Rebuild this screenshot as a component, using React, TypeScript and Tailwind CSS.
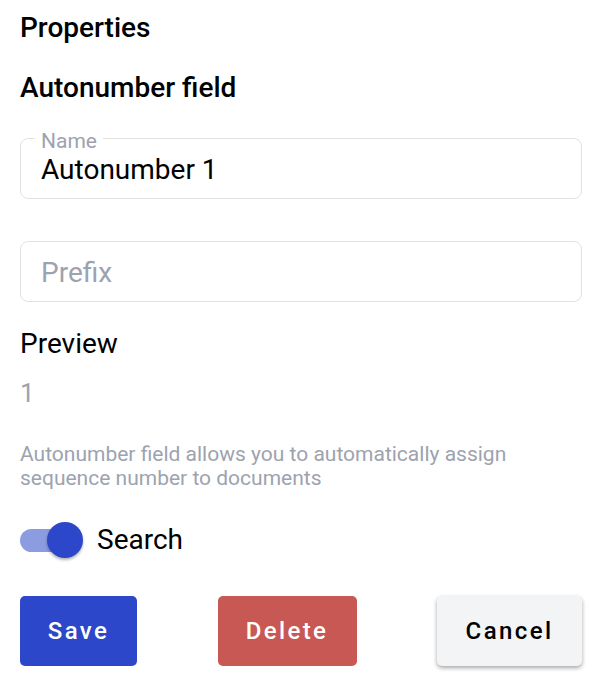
import React, { useState } from 'react'

const font = { fontFamily: 'Roboto, "Noto Sans", sans-serif' }

type FieldProps = {
  label?: string
  value?: string
  placeholder?: string
}

const OutlinedField: React.FC<FieldProps> = ({ label, value, placeholder }) => {
  return (
    <div className="relative h-[61px] rounded-lg border border-[#e2e2e2] flex items-center pl-[20px] pt-[2px]">
      {label ? (
        <span className="absolute -top-[10px] left-[14px] bg-white px-[6px] text-[21px] leading-[24px] text-[#9ca3af]">
          {label}
        </span>
      ) : null}
      {value ? (
        <span className="text-[28px] leading-[32px] text-black">{value}</span>
      ) : (
        <span className="text-[28px] leading-[32px] text-[#9ca3af]">{placeholder}</span>
      )}
    </div>
  )
}

export default function App() {
  const [search, setSearch] = useState(true)

  return (
    <div className="min-h-[697px] bg-white" style={font}>
      <div className="ml-5 w-[562px] flex flex-col">
        <h2 className="mt-[12px] text-[28px] leading-[32px] font-medium text-black">Properties</h2>
        <h3 className="mt-[28px] text-[28px] leading-[32px] font-medium text-black">
          Autonumber field
        </h3>

        <div className="mt-[34px]">
          <OutlinedField label="Name" value="Autonumber 1" />
        </div>
        <div className="mt-[42px]">
          <OutlinedField placeholder="Prefix" />
        </div>

        <div className="mt-[26px] text-[28px] leading-[32px] text-black">Preview</div>
        <div className="mt-[17px] text-[26px] leading-[32px] text-[#9ca3af]">1</div>

        <p className="mt-[33px] text-[21px] leading-[24px] text-[#9ca3af]">
          Autonumber field allows you to automatically assign
          <br />
          sequence number to documents
        </p>

        <div className="mt-[32px] flex items-center h-[36px]">
          <button
            type="button"
            onClick={() => setSearch(!search)}
            className="relative w-[64px] h-[36px] flex items-center"
          >
            <span
              className={
                search
                  ? 'block w-[60px] h-[23px] rounded-full bg-[#8b9de0]'
                  : 'block w-[60px] h-[23px] rounded-full bg-gray-300'
              }
            />
            <span
              className={
                search
                  ? 'absolute left-[27px] top-0 w-[36px] h-[36px] rounded-full bg-[#2c47c9] shadow-[0_2px_3px_rgba(0,0,0,0.3)]'
                  : 'absolute left-0 top-0 w-[36px] h-[36px] rounded-full bg-white shadow-[0_2px_3px_rgba(0,0,0,0.3)]'
              }
            />
          </button>
          <span className="ml-[13px] text-[28px] leading-[32px] text-black">Search</span>
        </div>

        <div className="mt-[38px] flex justify-between">
          <button
            type="button"
            className="h-[70px] w-[117px] rounded-[5px] bg-[#2c47c9] text-white text-[24px] font-medium tracking-[0.1em]"
          >
            Save
          </button>
          <button
            type="button"
            className="h-[70px] w-[139px] rounded-[5px] bg-[#c75853] text-white text-[24px] font-medium tracking-[0.1em]"
          >
            Delete
          </button>
          <button
            type="button"
            className="h-[70px] w-[145px] rounded-[5px] bg-[#f3f4f6] text-black text-[24px] font-medium tracking-[0.1em] shadow-[0_2px_4px_rgba(0,0,0,0.35)]"
          >
            Cancel
          </button>
        </div>
      </div>
    </div>
  )
}
